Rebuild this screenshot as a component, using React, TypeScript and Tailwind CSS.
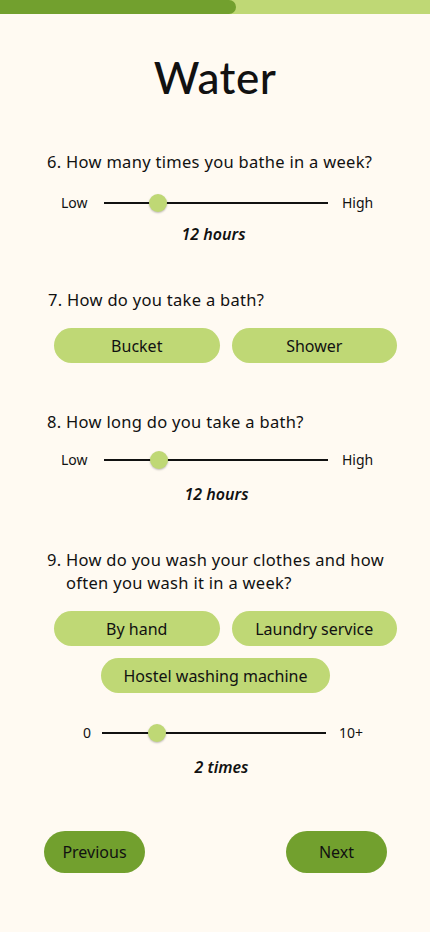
import { useState } from 'react'

const font = { fontFamily: '"Noto Sans", "Open Sans", Arial, sans-serif' }

function Slider({
  left,
  right,
  labelW,
  gapR,
  pos,
  rowPad,
  value,
  valuePad,
}: {
  left: string
  right: string
  labelW: string
  gapR: string
  pos: string
  rowPad: string
  value: string
  valuePad: string
}) {
  return (
    <>
      <div className={`flex items-center h-6 ${rowPad}`}>
        <span className={`${labelW} text-[14px] leading-6 text-[#111]`}>{left}</span>
        <div className="relative w-[224px] h-[2px] bg-[#111]">
          <div
            className={`absolute ${pos} -top-[8px] w-[18px] h-[18px] rounded-full bg-[#bfd875] shadow-[0_1px_2px_rgba(0,0,0,0.25)]`}
          />
        </div>
        <span className={`${gapR} text-[14px] leading-6 text-[#111]`}>{right}</span>
      </div>
      <div className={`text-center ${valuePad} text-[16px] leading-[22px] font-semibold italic text-[#111]`}>
        {value}
      </div>
    </>
  )
}

function Choice({ label, active, onClick, className = '' }: { label: string; active: boolean; onClick: () => void; className?: string }) {
  return (
    <button
      onClick={onClick}
      className={`h-[35px] rounded-full text-[16px] text-[#111] ${active ? 'bg-[#a9c85c]' : 'bg-[#bfd875]'} ${className}`}
    >
      {label}
    </button>
  )
}

export default function App() {
  const [bath, setBath] = useState('')
  const [wash, setWash] = useState('')

  return (
    <div style={font} className="min-h-[932px] w-[430px] bg-[#fffaf2] text-[#111]">
      <div className="h-[14px] bg-[#bfd875]">
        <div className="h-full w-[236px] rounded-r-full bg-[#72a02e]" />
      </div>

      <h1
        style={{ fontFamily: 'Lato, "Noto Sans", sans-serif' }}
        className="mt-[39px] text-center text-[44px] leading-[48px] font-medium tracking-[0.5px]"
      >
        Water
      </h1>

      <p className="mt-[49px] pl-[47px] text-[16.5px] tracking-[0.3px] leading-6">6. How many times you bathe in a week?</p>
      <Slider left="Low" right="High" rowPad="mt-[17px] pl-[61px]" labelW="w-[43px]" gapR="ml-[14px]" pos="left-[45px]" value="12 hours" valuePad="pr-[3px] mt-[8px]" />

      <p className="mt-[43px] pl-[48px] text-[16.5px] tracking-[0.3px] leading-6">7. How do you take a bath?</p>
      <div className="mt-[16px] ml-[54px] w-[343px] grid grid-cols-2 gap-3">
        <Choice label="Bucket" active={bath === 'bucket'} onClick={() => setBath('bucket')} />
        <Choice label="Shower" active={bath === 'shower'} onClick={() => setBath('shower')} />
      </div>

      <p className="mt-[47px] pl-[47px] text-[16.5px] tracking-[0.3px] leading-6">8. How long do you take a bath?</p>
      <Slider left="Low" right="High" rowPad="mt-[14px] pl-[61px]" labelW="w-[43px]" gapR="ml-[14px]" pos="left-[46px]" value="12 hours" valuePad="pl-[3px] mt-[11px]" />

      <div className="mt-[43px] pl-[47px] pr-[44px] flex text-[16.5px] tracking-[0.3px] leading-[23px]">
        <span className="w-[19px] shrink-0">9.</span>
        <p>How do you wash your clothes and how often you wash it in a week?</p>
      </div>
      <div className="mt-[17px] ml-[54px] w-[343px] grid grid-cols-2 gap-3">
        <Choice label="By hand" active={wash === 'hand'} onClick={() => setWash('hand')} />
        <Choice label="Laundry service" active={wash === 'laundry'} onClick={() => setWash('laundry')} />
      </div>
      <div className="mt-3 ml-[101px] w-[229px] flex">
        <Choice label="Hostel washing machine" active={wash === 'hostel'} onClick={() => setWash('hostel')} className="w-full" />
      </div>

      <Slider left="0" right="10+" rowPad="mt-[28px] pl-[83px]" labelW="w-[19px]" gapR="ml-[13px]" pos="left-[46px]" value="2 times" valuePad="pl-[13px] mt-[11px]" />

      <div className="mt-[53px] pl-[44px] pr-[43px] flex justify-between">
        <button className="h-[42px] w-[101px] rounded-full bg-[#72a02e] text-[16px] text-[#111]">Previous</button>
        <button className="h-[42px] w-[101px] rounded-full bg-[#72a02e] text-[16px] text-[#111]">Next</button>
      </div>
    </div>
  )
}
